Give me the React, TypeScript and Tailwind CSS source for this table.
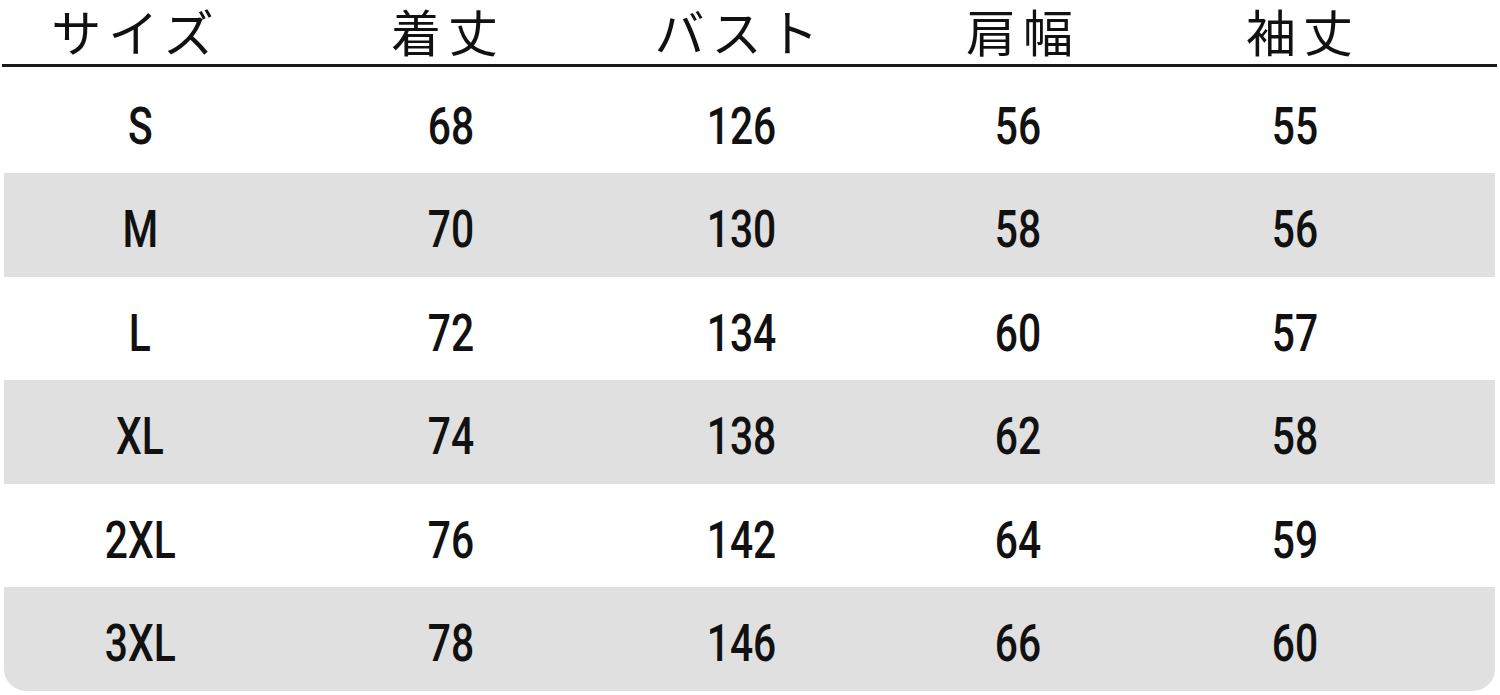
const headers = [
  { label: "サイズ", shift: "pr-[8px]" },
  { label: "着丈", shift: "pr-[6px]" },
  { label: "バスト", shift: "pr-[2px]" },
  { label: "肩幅", shift: "pl-[10px]" },
  { label: "袖丈", shift: "pl-[16px]" },
];

const rows = [
  ["S", "68", "126", "56", "55"],
  ["M", "70", "130", "58", "56"],
  ["L", "72", "134", "60", "57"],
  ["XL", "74", "138", "62", "58"],
  ["2XL", "76", "142", "64", "59"],
  ["3XL", "78", "146", "66", "60"],
];

const cols = "grid grid-cols-[272px_350px_230px_324px_230px_1fr]";

export default function App() {
  return (
    <div className="w-[1500px] h-[695px] bg-white overflow-hidden">
      <div className="pl-[2px] pr-[3px]">
        <div
          className={`${cols} h-[64px] items-center pl-[2px] pb-[4px] text-[#111] font-normal text-[50px] tracking-[7px] leading-[60px]`}
          style={{ fontFamily: "'Noto Sans CJK JP', 'Noto Sans', sans-serif" }}
        >
          {headers.map((h) => (
            <div key={h.label} className={`text-center whitespace-nowrap ${h.shift}`}>
              {h.label}
            </div>
          ))}
        </div>
        <div className="h-[3px] bg-[#1a1a1a]" />
      </div>

      <div className="pl-[4px] pr-[5px] pt-[2.5px]">
        {rows.map((row, i) => (
          <div
            key={row[0]}
            className={`${cols} h-[103.5px] items-center pt-[10px] ${
              i % 2 === 1 ? "bg-[#e0e0e0]" : ""
            } ${i === rows.length - 1 ? "rounded-b-[22px]" : ""}`}
          >
            {row.map((cell, j) => (
              <div key={j} className="text-center">
                <span
                  className="inline-block scale-x-[0.8] text-[51px] font-medium leading-none text-[#111]"
                  style={{ fontFamily: "Roboto, 'Liberation Sans', sans-serif" }}
                >
                  {cell}
                </span>
              </div>
            ))}
          </div>
        ))}
      </div>
    </div>
  );
}
